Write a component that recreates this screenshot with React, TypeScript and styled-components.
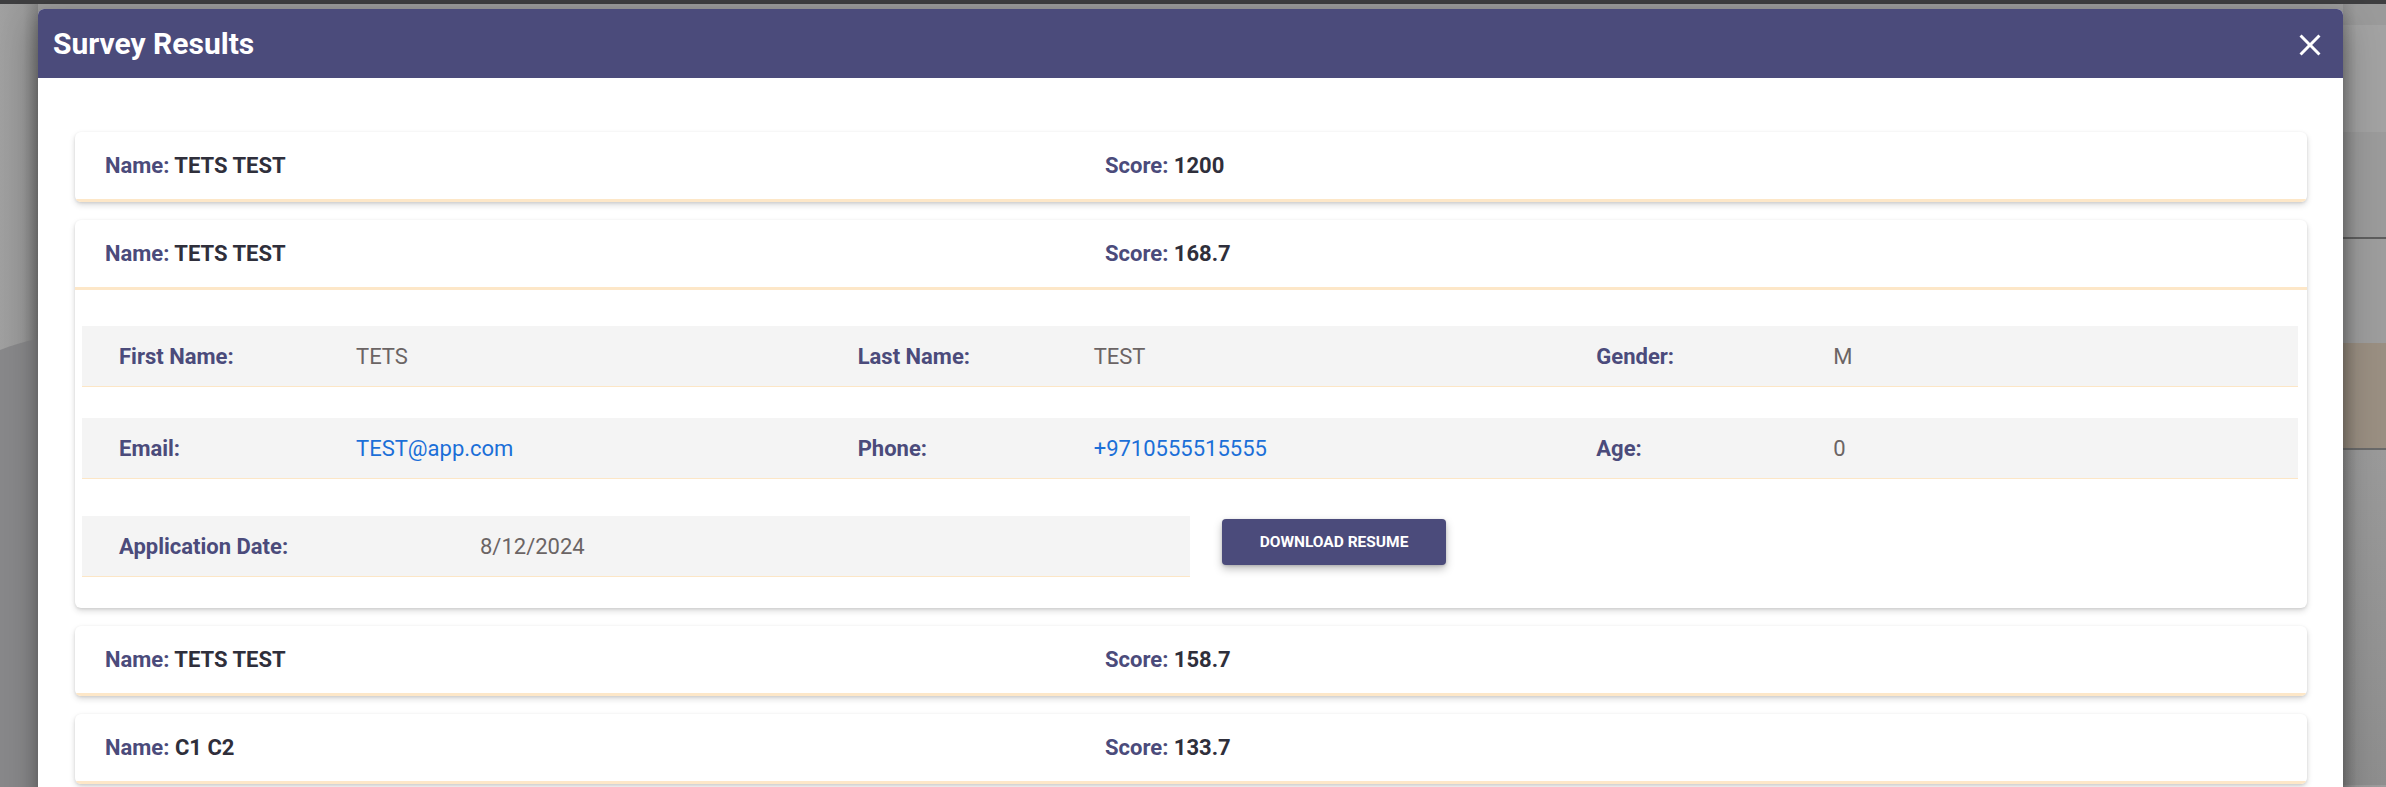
import React from "react";
import styled, { createGlobalStyle } from "styled-components";

interface Detail {
    firstName: string;
    lastName: string;
    gender: string;
    email: string;
    phone: string;
    age: string;
    applicationDate: string;
}

interface Result {
    id: number;
    name: string;
    score: string;
    detail?: Detail;
}

const results: Result[] = [
    { id: 1, name: "TETS TEST", score: "1200" },
    {
        id: 2,
        name: "TETS TEST",
        score: "168.7",
        detail: {
            firstName: "TETS",
            lastName: "TEST",
            gender: "M",
            email: "TEST@app.com",
            phone: "+9710555515555",
            age: "0",
            applicationDate: "8/12/2024",
        },
    },
    { id: 3, name: "TETS TEST", score: "158.7" },
    { id: 4, name: "C1 C2", score: "133.7" },
];

const GlobalStyle = createGlobalStyle`
    html, body {
        margin: 0;
        padding: 0;
        height: 787px;
        overflow: hidden;
        font-family: Roboto, "Liberation Sans", sans-serif;
    }
`;

const Page = styled.div`
    display: flex;
    flex-direction: column;
    height: 787px;
    background: #9b9b9b;
    overflow: hidden;
`;

const TopStrip = styled.div`
    height: 4px;
    flex: 0 0 4px;
    background: #3e3e40;
`;

const Stage = styled.div`
    display: flex;
    flex: 1;
    min-height: 0;
`;

const LeftGutter = styled.div`
    flex: 0 0 38px;
    background: linear-gradient(to right, #a0a0a0 0%, #9a9a9a 60%, #858585 100%);
    svg {
        display: block;
    }
`;

const RightGutter = styled.div`
    flex: 0 0 43px;
    display: flex;
    flex-direction: column;
    background: linear-gradient(to right, #8a8a8a 0, #9a9a9a 14px, #9c9c9c 100%);
`;

const Band = styled.div<{ $h: number; $bg: string; $line?: string }>`
    height: ${(p) => p.$h}px;
    flex: 0 0 ${(p) => p.$h}px;
    background: linear-gradient(to right, rgba(0, 0, 0, 0.08) 0, rgba(0, 0, 0, 0) 14px), ${(p) => p.$bg};
    border-bottom: ${(p) => (p.$line ? `2px solid ${p.$line}` : "none")};
`;

const ModalColumn = styled.div`
    flex: 1;
    padding-top: 5px;
    position: relative;
    z-index: 1;
    min-width: 0;
`;

const Modal = styled.div`
    background: #fff;
    border-radius: 6px 6px 0 0;
    box-shadow: 0 16px 36px rgba(0, 0, 0, 0.3), 0 6px 14px rgba(0, 0, 0, 0.2);
    height: 800px;
    overflow: hidden;
`;

const ModalHeader = styled.div`
    height: 69px;
    display: flex;
    align-items: center;
    justify-content: space-between;
    padding: 0 15px;
    background: #4b4b7b;
    color: #fff;
`;

const Title = styled.h2`
    margin: 0;
    font-size: 30px;
    font-weight: 700;
    letter-spacing: 0;
`;

const CloseButton = styled.button`
    background: none;
    border: none;
    padding: 0;
    margin-top: 3px;
    color: #fff;
    cursor: pointer;
    display: flex;
    svg {
        width: 36px;
        height: 36px;
    }
`;

const ModalBody = styled.div`
    padding: 54px 36px 0 37px;
    display: flex;
    flex-direction: column;
    gap: 18px;
`;

const Card = styled.div`
    background: #fff;
    border-radius: 6px;
    overflow: hidden;
    box-shadow: 0 3px 6px rgba(0, 0, 0, 0.14), 0 1px 3px rgba(0, 0, 0, 0.1);
`;

const CardHeader = styled.div`
    height: 67px;
    display: flex;
    align-items: center;
    padding: 0 30px;
    border-bottom: 3px solid #fde7c8;
`;

const HeadCol = styled.div<{ $w?: number }>`
    flex: ${(p) => (p.$w ? `0 0 ${p.$w}px` : "1")};
    font-size: 22px;
    font-weight: 700;
    color: #2f2f3b;
`;

const HeadLabel = styled.span`
    color: #4b4b7b;
`;

const Details = styled.div`
    padding: 36px 9px 31px 7px;
`;

const InfoRow = styled.div<{ $gap?: number }>`
    display: grid;
    grid-template-columns: repeat(3, 1fr);
    height: 60px;
    margin-top: ${(p) => p.$gap ?? 0}px;
    background: #f4f4f4;
    border-bottom: 1px solid #fce6c6;
`;

const LastRow = styled.div`
    display: flex;
    align-items: flex-start;
    margin-top: 37px;
`;

const DateBlock = styled.div`
    flex: 0 0 1108px;
    height: 60px;
    display: flex;
    background: #f4f4f4;
    border-bottom: 1px solid #fce6c6;
`;

const Field = styled.div<{ $labelWidth: number }>`
    display: flex;
    align-items: center;
    padding-left: 37px;
    font-size: 22px;
    & > span:first-child {
        flex: 0 0 ${(p) => p.$labelWidth}px;
    }
`;

const Label = styled.span`
    font-weight: 700;
    color: #4b4b7b;
`;

const Value = styled.span<{ $link?: boolean }>`
    color: ${(p) => (p.$link ? "#1b6fd8" : "#6b6464")};
`;

const DownloadButton = styled.button`
    margin: 3px 0 0 32px;
    width: 224px;
    height: 46px;
    border: none;
    border-radius: 4px;
    background: #4b4b7b;
    color: #fff;
    font-family: Roboto, "Liberation Sans", sans-serif;
    font-size: 15.5px;
    font-weight: 700;
    letter-spacing: 0;
    text-transform: uppercase;
    box-shadow: 0 4px 8px rgba(0, 0, 0, 0.25), 0 1px 3px rgba(0, 0, 0, 0.15);
    cursor: pointer;
`;

const CloseIcon = () => (
    <svg viewBox="0 0 24 24" fill="currentColor">
        <path d="M19 6.41 17.59 5 12 10.59 6.41 5 5 6.41 10.59 12 5 17.59 6.41 19 12 13.41 17.59 19 19 17.59 13.41 12z" />
    </svg>
);

const ResultCard: React.FC<{ result: Result }> = ({ result }) => {
    const d = result.detail;
    return (
        <Card>
            <CardHeader>
                <HeadCol $w={1000}>
                    <HeadLabel>Name: </HeadLabel>
                    {result.name}
                </HeadCol>
                <HeadCol>
                    <HeadLabel>Score: </HeadLabel>
                    {result.score}
                </HeadCol>
            </CardHeader>
            {d && (
                <Details>
                    <InfoRow>
                        <Field $labelWidth={237}>
                            <Label>First Name:</Label>
                            <Value>{d.firstName}</Value>
                        </Field>
                        <Field $labelWidth={236}>
                            <Label>Last Name:</Label>
                            <Value>{d.lastName}</Value>
                        </Field>
                        <Field $labelWidth={237}>
                            <Label>Gender:</Label>
                            <Value>{d.gender}</Value>
                        </Field>
                    </InfoRow>
                    <InfoRow $gap={31}>
                        <Field $labelWidth={237}>
                            <Label>Email:</Label>
                            <Value $link>{d.email}</Value>
                        </Field>
                        <Field $labelWidth={236}>
                            <Label>Phone:</Label>
                            <Value $link>{d.phone}</Value>
                        </Field>
                        <Field $labelWidth={237}>
                            <Label>Age:</Label>
                            <Value>{d.age}</Value>
                        </Field>
                    </InfoRow>
                    <LastRow>
                        <DateBlock>
                            <Field $labelWidth={361}>
                                <Label>Application Date:</Label>
                                <Value>{d.applicationDate}</Value>
                            </Field>
                        </DateBlock>
                        <DownloadButton>Download Resume</DownloadButton>
                    </LastRow>
                </Details>
            )}
        </Card>
    );
};

const App: React.FC = () => {
    return (
        <>
            <GlobalStyle />
            <Page>
                <TopStrip />
                <Stage>
                    <LeftGutter>
                        {/* curved shape of the page underneath the backdrop */}
                        <svg width="38" height="783" viewBox="0 0 38 783">
                            <path d="M0 346 C 12 341, 26 337, 38 335 L38 783 L0 783 Z" fill="#88888a" />
                        </svg>
                    </LeftGutter>
                    <ModalColumn>
                        <Modal>
                            <ModalHeader>
                                <Title>Survey Results</Title>
                                <CloseButton aria-label="close">
                                    <CloseIcon />
                                </CloseButton>
                            </ModalHeader>
                            <ModalBody>
                                {results.map((r) => (
                                    <ResultCard key={r.id} result={r} />
                                ))}
                            </ModalBody>
                        </Modal>
                    </ModalColumn>
                    <RightGutter>
                        <Band $h={21} $bg="#9a9a9a" />
                        <Band $h={107} $bg="#a2a2a2" />
                        <Band $h={105} $bg="#9b9b9b" $line="#5e5e5e" />
                        <Band $h={104} $bg="#9d9d9d" />
                        <Band $h={105} $bg="#9a8f82" $line="#6a6a6a" />
                        <Band $h={335} $bg="linear-gradient(#9a9a9a, #8e8e8e)" />
                    </RightGutter>
                </Stage>
            </Page>
        </>
    );
};

export default App;
